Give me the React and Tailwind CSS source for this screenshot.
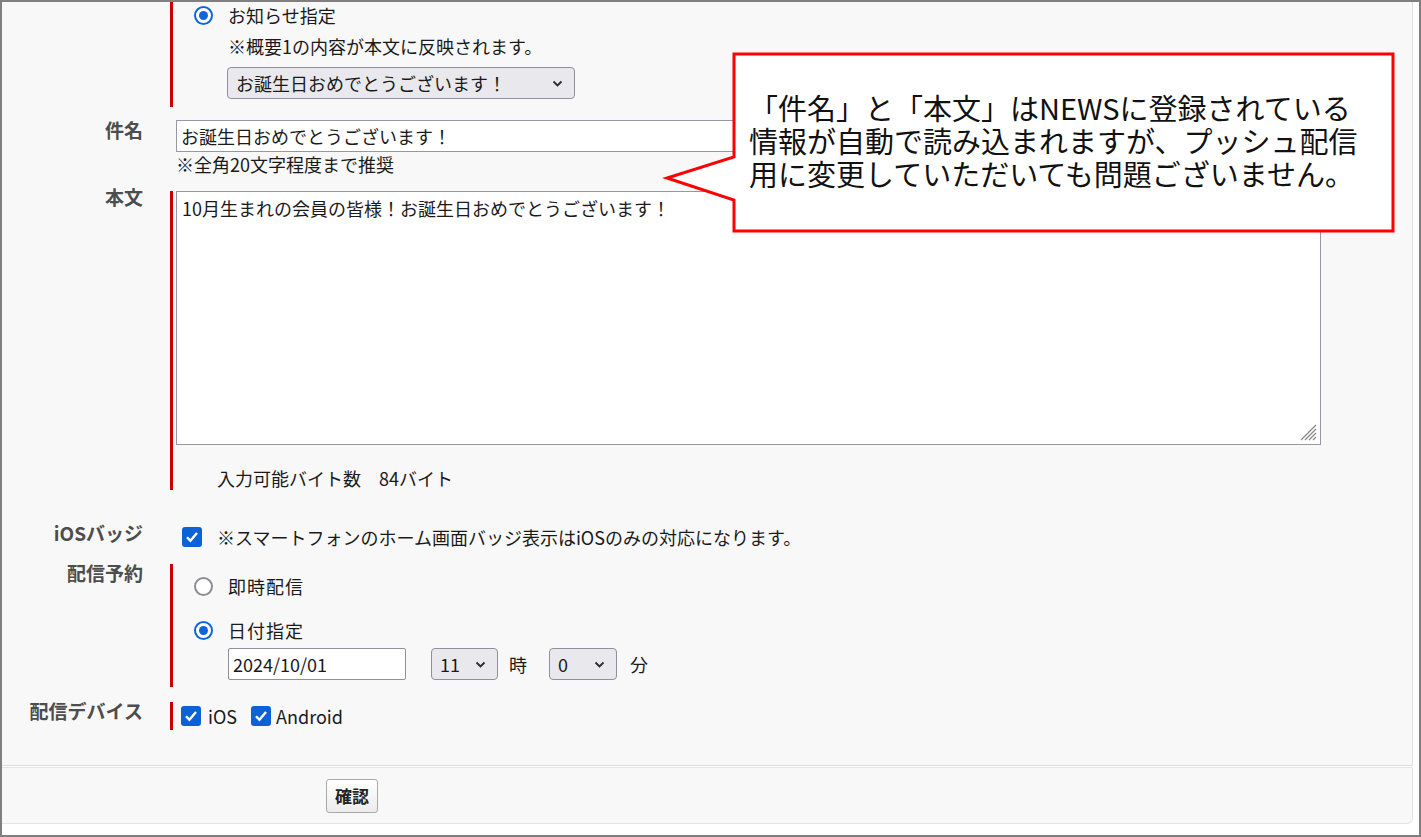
import React from "react";

const Radio = ({ checked }) =>
  checked ? (
    <span className="w-[19px] h-[19px] rounded-full border-2 border-[#1065d8] bg-white flex items-center justify-center shrink-0">
      <span className="w-[9px] h-[9px] rounded-full bg-[#1065d8]" />
    </span>
  ) : (
    <span className="w-[19px] h-[19px] rounded-full border-2 border-[#8d8d95] bg-white shrink-0" />
  );

const Check = () => (
  <span className="w-[20px] h-[20px] rounded-[3px] bg-[#0b62d6] flex items-center justify-center shrink-0">
    <svg width="16" height="16" viewBox="0 0 16 16">
      <path d="M3 8.2 L6.4 11.8 L13 4" fill="none" stroke="#fff" strokeWidth="2.4" />
    </svg>
  </span>
);

const Chevron = () => (
  <svg width="11" height="7" viewBox="0 0 11 7">
    <polyline points="1.5,1.5 5.5,5.5 9.5,1.5" fill="none" stroke="#2b2b2b" strokeWidth="1.8" />
  </svg>
);

const Select = ({ value, className }) => (
  <div
    className={
      "h-[32px] bg-[#e9e9ed] border border-[#8f8f9d] rounded-[4px] flex items-center justify-between pl-[8px] pr-[11px] " +
      className
    }
  >
    <span>{value}</span>
    <Chevron />
  </div>
);

const Row = ({ label, required, labelTop = "mt-0", children }) => (
  <div className="flex">
    <div className={"w-[168px] shrink-0 pr-[27px] text-right font-bold text-[19px] text-[#4d4d4d] leading-[20px] " + labelTop}>
      {label}
    </div>
    <div className={"flex-1 pl-[3px] border-l-[3px] " + (required ? "border-[#c80000]" : "border-transparent")}>
      {children}
    </div>
  </div>
);

export default function App() {
  return (
    <div className="w-[1421px] h-[837px] border-2 border-[#7f7f7f] bg-white overflow-hidden font-['Noto_Sans_CJK_JP',sans-serif] text-[18px] text-[#1a1a1a]">
      <div className="relative h-full flex flex-col">
        <div className="mr-[6px] bg-[#f8f8f8] border-r border-b border-[#dedede] pb-[35px]">
          {/* お知らせ指定 */}
          <Row required>
            <div className="flex items-center h-[26px] ml-[18px] gap-[15px] leading-[20px]">
              <Radio checked />
              <span>お知らせ指定</span>
            </div>
            <div className="h-[26px] mt-[5px] ml-[52px] flex items-center">※概要1の内容が本文に反映されます。</div>
            <Select value="お誕生日おめでとうございます！" className="w-[348px] mt-[8px] mb-[8px] ml-[51px]" />
          </Row>

          <div className="mt-[13px]">
            <Row label="件名">
              <div className="w-[1145px] h-[32px] bg-white border border-[#9696a4] flex items-center px-[4px]">
                お誕生日おめでとうございます！
              </div>
              <div className="h-[24px] flex items-center">※全角20文字程度まで推奨</div>
            </Row>
          </div>

          <div className="mt-[15px]">
            <Row label="本文" required labelTop="-mt-[4px]">
              <div className="relative w-[1145px] h-[254px] bg-white border border-[#9696a4] pt-[4px] pl-[5px] leading-[24px]">
                10月生まれの会員の皆様！お誕生日おめでとうございます！
                <svg className="absolute right-[3px] bottom-[3px]" width="18" height="18" viewBox="0 0 18 18">
                  <line x1="17" y1="2" x2="2" y2="17" stroke="#8a8a8a" strokeWidth="1.3" />
                  <line x1="17" y1="6" x2="6" y2="17" stroke="#8a8a8a" strokeWidth="1.3" />
                  <line x1="17" y1="10" x2="10" y2="17" stroke="#8a8a8a" strokeWidth="1.3" />
                  <line x1="17" y1="14" x2="14" y2="17" stroke="#8a8a8a" strokeWidth="1.3" />
                </svg>
              </div>
              <div className="h-[24px] mt-[21px] ml-[41px] flex items-center">入力可能バイト数　84バイト</div>
            </Row>
          </div>

          <div className="mt-[35px]">
            <Row label="iOSバッジ" labelTop="-mt-[2px]">
              <div className="h-[24px] flex items-center ml-[6px] gap-[15px]">
                <Check />
                <span>※スマートフォンのホーム画面バッジ表示はiOSのみの対応になります。</span>
              </div>
            </Row>
          </div>

          <div className="mt-[15px]">
            <Row label="配信予約" required labelTop="-mt-[1px]">
              <div className="pt-[12px] pb-[7px]">
                <div className="h-[20px] flex items-center ml-[18px] gap-[15px]">
                  <Radio />
                  <span className="tracking-[1px]">即時配信</span>
                </div>
                <div className="h-[20px] mt-[24px] flex items-center ml-[18px] gap-[15px]">
                  <Radio checked />
                  <span className="tracking-[1px]">日付指定</span>
                </div>
                <div className="mt-[8px] ml-[52px] flex items-center">
                  <div className="w-[178px] h-[32px] bg-white border border-[#8f8f9d] rounded-[2px] flex items-center px-[4px]">
                    2024/10/01
                  </div>
                  <Select value="11" className="w-[67px] ml-[25px]" />
                  <span className="ml-[11px]">時</span>
                  <Select value="0" className="w-[68px] ml-[22px]" />
                  <span className="ml-[13px]">分</span>
                </div>
              </div>
            </Row>
          </div>

          <div className="mt-[15px]">
            <Row label="配信デバイス" required labelTop="-mt-[1px]">
              <div className="h-[28px] flex items-center ml-[5px]">
                <Check />
                <span className="ml-[7px]">iOS</span>
                <span className="ml-[14px]">
                  <Check />
                </span>
                <span className="ml-[5px]">Android</span>
              </div>
            </Row>
          </div>
        </div>

        <div className="mr-[6px] mt-[1px] h-[57px] bg-[#f8f8f8] border-t border-r border-b border-[#e4e4e4] rounded-br-[6px] flex items-center">
          <button className="ml-[324px] w-[52px] h-[34px] rounded-[3px] border border-[#a9a9a9] bg-gradient-to-b from-white to-[#ececec] font-bold text-[17px] text-[#222] leading-none">
            確認
          </button>
        </div>

        {/* callout */}
        <svg className="absolute left-[658px] top-[48px]" width="740" height="186" viewBox="0 0 740 186">
          <path
            d="M74 4 H733 V181 H74 V150 L7 128 L74 107 Z"
            fill="#fff"
            stroke="#ff0000"
            strokeWidth="3"
            strokeLinejoin="miter"
          />
        </svg>
        <div className="absolute left-[747px] top-[89px] text-[29px] leading-[33px] text-[#111] whitespace-nowrap">
          <div>「件名」と「本文」はNEWSに登録されている</div>
          <div>情報が自動で読み込まれますが、プッシュ配信</div>
          <div>用に変更していただいても問題ございません。</div>
        </div>
      </div>
    </div>
  );
}
